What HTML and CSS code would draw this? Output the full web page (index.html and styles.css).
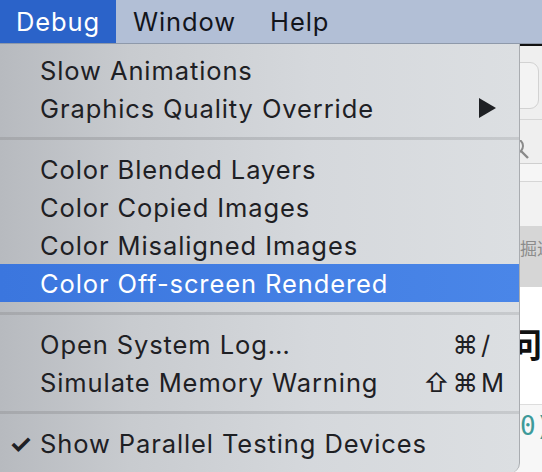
FILE: index.html
```html
<!DOCTYPE html>
<html>
<head>
<meta charset="utf-8">
<link rel="stylesheet" href="styles.css">
</head>
<body>
<div class="screen">
  <div class="menubar">
    <div class="mb-item active">Debug</div>
    <div class="mb-item">Window</div>
    <div class="mb-item">Help</div>
  </div>
  <div class="stage">
    <div class="appwin">
      <div class="aw-top">
        <div class="aw-field"></div>
      </div>
      <div class="aw-search">
        <svg class="aw-mag" width="20" height="20" viewBox="0 0 20 20"><circle cx="2" cy="6" r="7" fill="none" stroke="#8a8a8a" stroke-width="2"/><line x1="7" y1="11" x2="14" y2="18" stroke="#8a8a8a" stroke-width="2.4"/></svg>
      </div>
      <div class="aw-row"></div>
      <div class="aw-row tall"></div>
      <div class="aw-tab"><span class="aw-tabtext">掘进</span></div>
      <div class="aw-body"><span class="aw-big">问</span></div>
      <div class="aw-code"><span class="aw-codetext">0);</span></div>
    </div>
    <div class="menu">
      <div class="item">Slow Animations</div>
      <div class="item"><span class="label">Graphics Quality Override</span><span class="arrow"></span></div>
      <div class="sep"></div>
      <div class="item">Color Blended Layers</div>
      <div class="item">Color Copied Images</div>
      <div class="item">Color Misaligned Images</div>
      <div class="item hl">Color Off-screen Rendered</div>
      <div class="sep"></div>
      <div class="item"><span class="label">Open System Log…</span><span class="mods">⌘</span><span class="key">/</span></div>
      <div class="item"><span class="label">Simulate Memory Warning</span><span class="mods">⇧⌘</span><span class="key">M</span></div>
      <div class="sep"></div>
      <div class="item checked"><span class="check">✓</span><span class="label">Show Parallel Testing Devices</span></div>
    </div>
  </div>
</div>
</body>
</html>
```

FILE: styles.css
```css
html, body {
  margin: 0;
  padding: 0;
}
body {
  width: 542px;
  height: 472px;
  overflow: hidden;
  font-family: Inter, "Liberation Sans", "Noto Sans CJK SC", sans-serif;
  color: #1e2024;
}
.screen {
  width: 542px;
  height: 472px;
  display: flex;
  flex-direction: column;
}
.menubar {
  height: 43px;
  background: #b2bfd6;
  border-bottom: 1px solid #8e99aa;
  display: flex;
  align-items: stretch;
  font-size: 25.5px;
  letter-spacing: 0.9px;
}
.mb-item {
  display: flex;
  align-items: center;
  padding: 0 17px;
  color: #12151c;
}
.mb-item.active {
  background: #2b63c9;
  color: #ffffff;
  padding: 0 0 0 16px;
  width: 100px;
}
.stage {
  position: relative;
  flex: 1;
  background: #eeeeee;
}
.appwin {
  position: absolute;
  left: 0;
  top: 0;
  right: 0;
  bottom: 0;
  border-top: 2px solid #111;
  background: #efefef;
  display: flex;
  flex-direction: column;
}
.aw-top {
  height: 74px;
  border-bottom: 1px solid #d6d6d6;
  display: flex;
  justify-content: flex-end;
  align-items: flex-start;
  padding-top: 16px;
  box-sizing: border-box;
}
.aw-field {
  width: 60px;
  height: 45px;
  margin-right: 3px;
  border: 1px solid #d2d2d2;
  border-radius: 9px;
  background: #f3f3f3;
}
.aw-search {
  height: 44px;
  border-bottom: 1px solid #cfcfcf;
  display: flex;
  justify-content: flex-end;
  align-items: flex-start;
  padding-top: 20px;
  box-sizing: border-box;
}
.aw-mag {
  margin-right: 8px;
}
.aw-row {
  height: 17px;
  border-bottom: 1px solid #d6d6d6;
  background: #f6f6f6;
}
.aw-row.tall {
  height: 44px;
  background: #f2f2f2;
}
.aw-tab {
  height: 60px;
  background: #d6d6d6;
  display: flex;
  justify-content: flex-end;
  align-items: flex-start;
  padding-top: 8px;
  box-sizing: border-box;
  overflow: hidden;
}
.aw-tabtext {
  font-size: 17px;
  color: #8c8c8c;
  width: 22px;
  overflow: hidden;
  white-space: nowrap;
}
.aw-body {
  height: 118px;
  background: #ffffff;
  border-bottom: 1px solid #dddddd;
  display: flex;
  justify-content: flex-end;
  align-items: flex-start;
  padding-top: 42px;
  box-sizing: border-box;
  overflow: hidden;
}
.aw-big {
  font-size: 34px;
  font-weight: 700;
  color: #111;
  width: 22px;
  overflow: hidden;
  white-space: nowrap;
  line-height: 1;
  direction: rtl;
}
.aw-code {
  flex: 1;
  background: #f7f7f7;
  display: flex;
  justify-content: flex-end;
  padding-top: 6px;
  overflow: hidden;
}
.aw-codetext {
  font-family: "DejaVu Sans Mono", monospace;
  font-size: 26px;
  color: #3d9a9a;
  width: 22px;
  overflow: hidden;
  white-space: nowrap;
}
.menu {
  position: absolute;
  left: 0;
  top: 0;
  width: 520px;
  height: 429px;
  box-sizing: border-box;
  padding-top: 7px;
  background: linear-gradient(90deg, #b7babf 0%, #c8cbcf 25%, #d5d8dc 60%, #dcdfe2 100%);
  border-right: 1px solid #a9acb0;
  border-bottom-right-radius: 10px;
  font-size: 25.5px;
  letter-spacing: 0.9px;
}
.item {
  height: 38px;
  display: flex;
  align-items: center;
  padding: 0 14px 0 40px;
  position: relative;
  color: #1e2024;
}
.item .label {
  flex: 1;
  white-space: nowrap;
}
.item.hl {
  background: linear-gradient(90deg, #3b76de 0%, #4a86e8 100%);
  color: #ffffff;
}
.item .mods {
  letter-spacing: 3px;
}
.item .key {
  width: 24px;
  text-align: left;
  letter-spacing: 0;
}
.arrow {
  width: 0;
  height: 0;
  border-top: 10px solid transparent;
  border-bottom: 10px solid transparent;
  border-left: 17px solid #1e2024;
  margin-right: 9px;
}
.check {
  position: absolute;
  left: 9px;
  font-size: 26px;
  font-weight: 700;
}
.sep {
  height: 3px;
  margin: 10px 0;
  background: linear-gradient(90deg, #a6a8ac 0%, #b8bbbf 50%, #c7cacd 100%);
}
```
